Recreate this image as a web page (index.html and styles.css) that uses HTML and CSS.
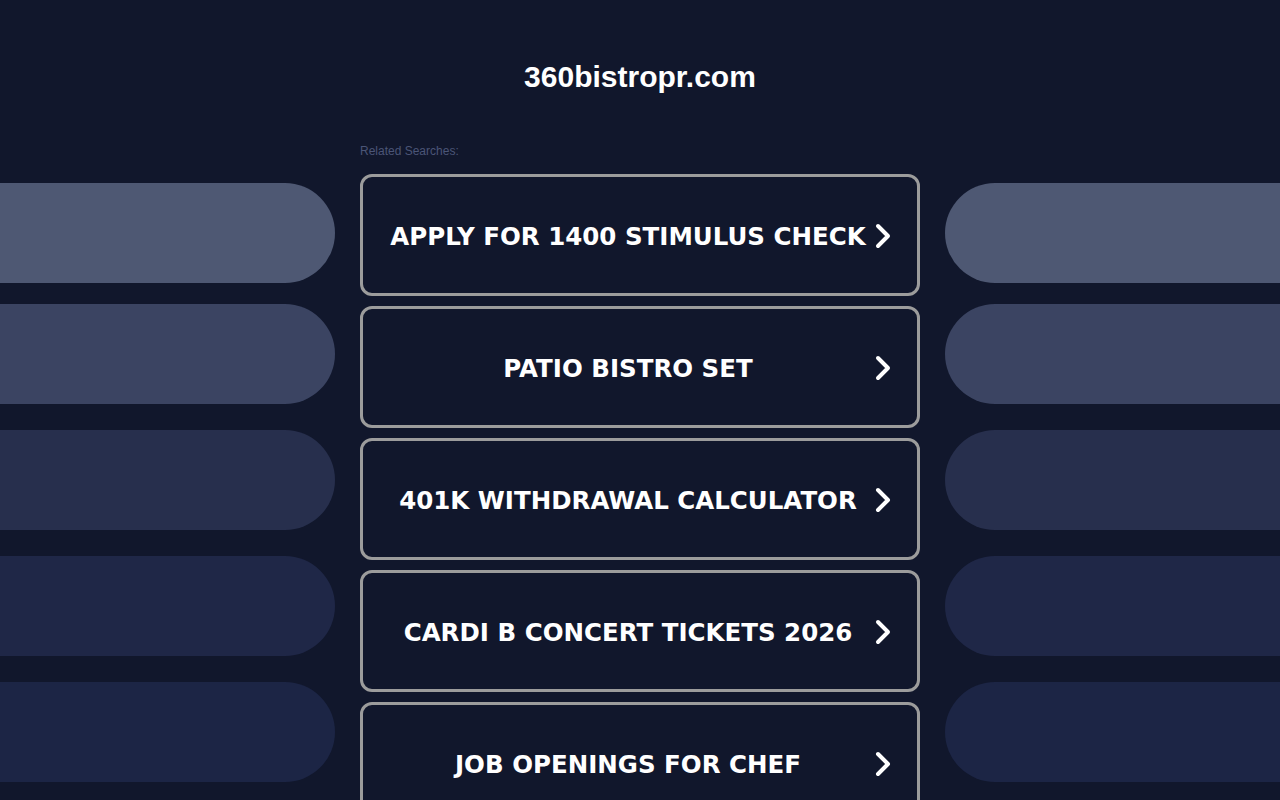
FILE: index.html
```html
<!DOCTYPE html>
<html lang="en">
<head>
    <meta charset="UTF-8">
    <meta name="viewport" content="width=device-width, initial-scale=1.0">
    <title>360bistropr.com</title>
    <link rel="stylesheet" href="styles.css">
</head>
<body>
    <div class="header">
        <h1 class="domain">360bistropr.com</h1>
    </div>
    <div class="main">
        <!-- 左侧 -->
        <div class="side side_left">
            <div class="pill pill1"></div>
            <div class="pill pill2"></div>
            <div class="pill pill3"></div>
            <div class="pill pill4"></div>
            <div class="pill pill5"></div>
        </div>
        <!-- 中间 -->
        <div class="center">
            <div class="related">Related Searches:</div>
            <a class="card" href="#">
                <span class="card_text">APPLY FOR 1400 STIMULUS CHECK</span>
                <svg class="arrow" width="20" height="28" viewBox="0 0 20 28"><polyline points="5,4 15,14 5,24"/></svg>
            </a>
            <a class="card" href="#">
                <span class="card_text">PATIO BISTRO SET</span>
                <svg class="arrow" width="20" height="28" viewBox="0 0 20 28"><polyline points="5,4 15,14 5,24"/></svg>
            </a>
            <a class="card" href="#">
                <span class="card_text">401K WITHDRAWAL CALCULATOR</span>
                <svg class="arrow" width="20" height="28" viewBox="0 0 20 28"><polyline points="5,4 15,14 5,24"/></svg>
            </a>
            <a class="card" href="#">
                <span class="card_text">CARDI B CONCERT TICKETS 2026</span>
                <svg class="arrow" width="20" height="28" viewBox="0 0 20 28"><polyline points="5,4 15,14 5,24"/></svg>
            </a>
            <a class="card" href="#">
                <span class="card_text">JOB OPENINGS FOR CHEF</span>
                <svg class="arrow" width="20" height="28" viewBox="0 0 20 28"><polyline points="5,4 15,14 5,24"/></svg>
            </a>
        </div>
        <!-- 右侧 -->
        <div class="side side_right">
            <div class="pill pill1"></div>
            <div class="pill pill2"></div>
            <div class="pill pill3"></div>
            <div class="pill pill4"></div>
            <div class="pill pill5"></div>
        </div>
    </div>
</body>
</html>
```

FILE: styles.css
```css
*{
    padding: 0;
    margin: 0;
    box-sizing: border-box;
}
html, body{
    width: 1280px;
    height: 800px;
    overflow: hidden;
    background-color: #11172c;
}
body{
    font-family: "Liberation Sans", Arial, sans-serif;
}
.header{
    height: 140px;
    padding-top: 61px;
    text-align: center;
}
.domain{
    font-size: 30px;
    line-height: 32px;
    font-weight: bold;
    color: #ffffff;
}
.main{
    display: flex;
    gap: 25px;
}
.side{
    width: 335px;
    flex-shrink: 0;
    padding-top: 43px;
}
.center{
    width: 560px;
    flex-shrink: 0;
}
.related{
    font-size: 12px;
    line-height: 22px;
    color: #4b5577;
    margin-bottom: 12px;
}
.card{
    display: flex;
    align-items: center;
    height: 122px;
    margin-bottom: 10px;
    padding: 2px 24px 0 20px;
    border: 3px solid #9c9c9c;
    border-radius: 12px;
    text-decoration: none;
}
.card_text{
    flex: 1;
    text-align: center;
    font-family: "DejaVu Sans", Verdana, sans-serif;
    font-weight: bold;
    font-size: 24.5px;
    color: #ffffff;
    white-space: nowrap;
}
.arrow{
    flex-shrink: 0;
}
.arrow polyline{
    fill: none;
    stroke: #ffffff;
    stroke-width: 4;
    stroke-linecap: round;
    stroke-linejoin: round;
}
.pill{
    height: 100px;
    margin-bottom: 26px;
}
.pill1{
    margin-bottom: 21px;
    background-color: #4e5873;
}
.pill2{
    background-color: #3b4462;
}
.pill3{
    background-color: #272f4d;
}
.pill4{
    background-color: #1f2747;
}
.pill5{
    background-color: #1c2545;
}
.side_left .pill{
    border-radius: 0 50px 50px 0;
}
.side_right .pill{
    border-radius: 50px 0 0 50px;
}
```
